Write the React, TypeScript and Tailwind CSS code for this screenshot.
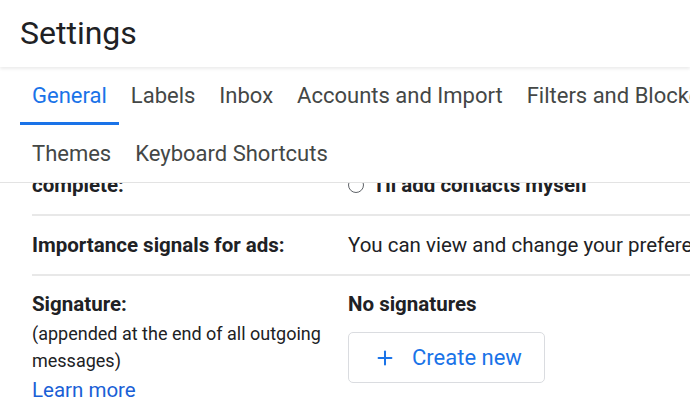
import React from 'react';
import { Plus } from 'lucide-react';

const tabsTop = ['General', 'Labels', 'Inbox', 'Accounts and Import', 'Filters and Blocked Addresses'];
const tabsBottom = ['Themes', 'Keyboard Shortcuts'];

const App = () => {
  return (
    <div className="w-[690px] h-[412px] overflow-hidden bg-white font-['Roboto',sans-serif] text-[#202124]">
      {/* header */}
      <div className="relative z-10 h-[67px] flex items-center pl-5 bg-white shadow-[0_2px_3px_rgba(0,0,0,0.08)]">
        <h1 className="text-[32px] leading-none -mt-[2px]">Settings</h1>
      </div>

      {/* tabs */}
      <div className="border-b border-[#e3e3e3] pl-5">
        <div className="flex h-[58px] whitespace-nowrap">
          {tabsTop.map((tab, i) => (
            <div
              key={tab}
              className={
                i === 0
                  ? 'flex items-center px-3 pt-[2px] text-[22px] text-[#1a73e8] border-b-[3px] border-[#1a73e8]'
                  : 'flex items-center px-3 pb-[1px] text-[22px] text-[#444746]'
              }
            >
              {tab}
            </div>
          ))}
        </div>
        <div className="flex h-[57px] items-center">
          {tabsBottom.map((tab) => (
            <div key={tab} className="px-3 text-[22px] text-[#444746]">
              {tab}
            </div>
          ))}
        </div>
      </div>

      {/* content, scrolled */}
      <div className="h-[229px] overflow-hidden pl-8">
        <div className="flex -mt-[12px] pb-[15px] border-b-2 border-[#e8e8e8] text-[20.5px] leading-[28px] font-bold whitespace-nowrap">
          <div className="w-[316px] shrink-0">complete:</div>
          <div className="flex items-center gap-3">
            <span className="w-4 h-4 shrink-0 rounded-full border-[1.5px] border-[#5f6368]" />
            <span>I'll add contacts myself</span>
          </div>
        </div>

        <div className="flex pt-[15px] pb-[15px] border-b-2 border-[#e8e8e8] text-[20.5px] leading-[28px] whitespace-nowrap">
          <div className="w-[316px] shrink-0 font-bold">Importance signals for ads:</div>
          <div>You can view and change your preferences here.</div>
        </div>

        <div className="flex pt-[14px]">
          <div className="w-[316px] shrink-0">
            <div className="text-[20.5px] leading-[28px] font-bold">Signature:</div>
            <div className="text-[18px] leading-[27px] mt-[2px] whitespace-nowrap">
              (appended at the end of all outgoing
              <br />
              messages)
            </div>
            <a className="block text-[20.5px] leading-[30px] mt-[1px] text-[#1a5fd6]">Learn more</a>
          </div>
          <div>
            <div className="text-[20.5px] leading-[28px] font-bold">No signatures</div>
            <button className="mt-[14px] w-[197px] h-[51px] flex items-center gap-[16px] pl-[25px] rounded-[5px] border border-[#dadce0] text-[#1a73e8] text-[22px]">
              <Plus className="w-[22px] h-[22px]" strokeWidth={2.2} />
              <span>Create new</span>
            </button>
          </div>
        </div>
      </div>
    </div>
  );
};

export default App;
